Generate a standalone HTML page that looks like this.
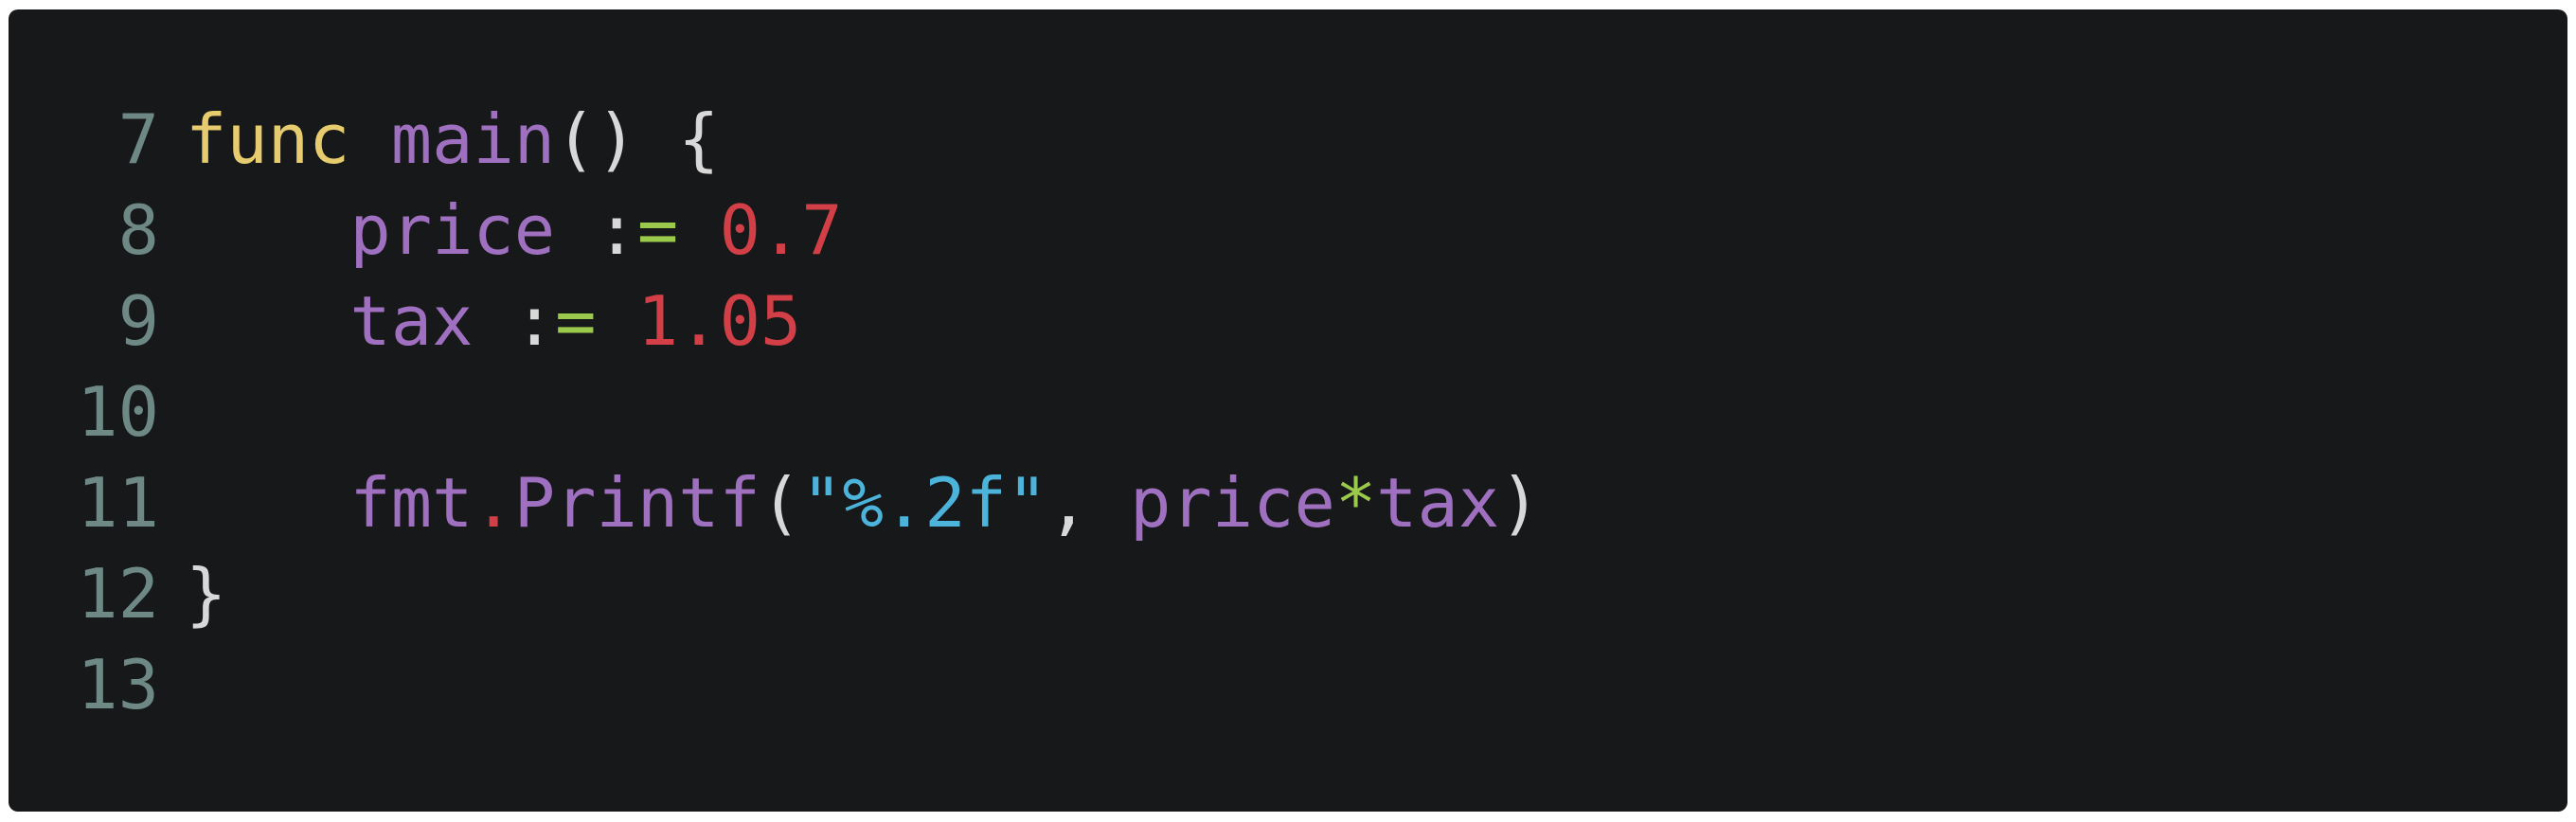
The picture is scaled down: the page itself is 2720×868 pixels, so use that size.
<!DOCTYPE html>
<html><head><meta charset="utf-8"><style>
html,body{margin:0;padding:0;background:#fff;width:2720px;height:868px;overflow:hidden}
.box{position:absolute;left:9px;top:10px;width:2702px;height:847px;background:#17181a;border-radius:10px;overflow:hidden}
.l{position:absolute;left:0;width:2600px;font-family:"DejaVu Sans Mono","Liberation Mono",monospace;font-size:72px;line-height:96px;white-space:pre;height:96px}
.n{position:absolute;left:0;width:159px;color:#6e8985;text-align:right}
.c{position:absolute;left:187px}
.y{color:#e6cc6e}.p{color:#a070c0}.w{color:#d8d8d8}.r{color:#d23f47}.g{color:#9bc94c}.b{color:#4cb4da}
</style></head><body>
<div class="box">
<div class="l" style="top:89px"><span class="n">7</span><span class="c"><span class="y">func</span> <span class="p">main</span><span class="w">() {</span></span></div>
<div class="l" style="top:185px"><span class="n">8</span><span class="c">    <span class="p">price</span> <span class="w">:</span><span class="g">=</span> <span class="r">0.7</span></span></div>
<div class="l" style="top:281px"><span class="n">9</span><span class="c">    <span class="p">tax</span> <span class="w">:</span><span class="g">=</span> <span class="r">1.05</span></span></div>
<div class="l" style="top:377px"><span class="n">10</span></div>
<div class="l" style="top:473px"><span class="n">11</span><span class="c">    <span class="p">fmt</span><span class="r">.</span><span class="p">Printf</span><span class="w">(</span><span class="b">"%.2f"</span><span class="w">,</span> <span class="p">price</span><span class="g">*</span><span class="p">tax</span><span class="w">)</span></span></div>
<div class="l" style="top:569px"><span class="n">12</span><span class="c"><span class="w">}</span></span></div>
<div class="l" style="top:665px"><span class="n">13</span></div>
</div>
</body></html>
